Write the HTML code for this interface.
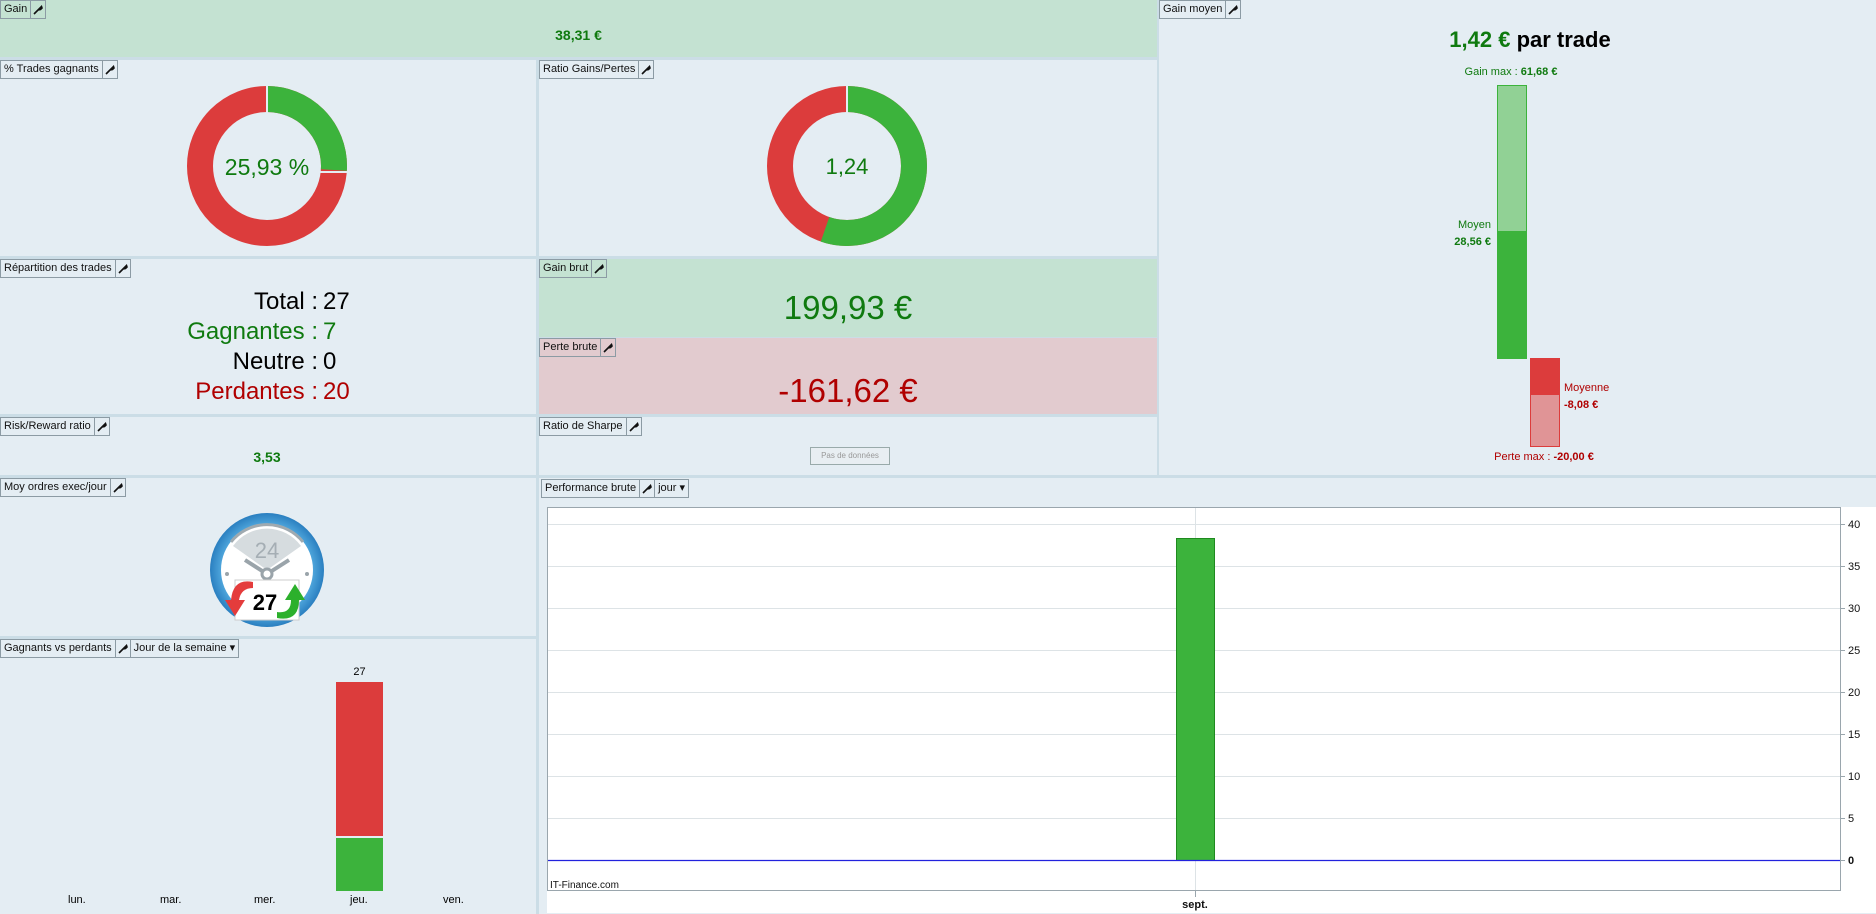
<!DOCTYPE html>
<html><head><meta charset="utf-8"><style>
*{margin:0;padding:0;box-sizing:border-box}
body{width:1876px;height:914px;background:#cbdde6;font-family:"Liberation Sans",Arial,sans-serif;position:relative;overflow:hidden}
.p{position:absolute;background:#e4edf3}
.g{background:#c4e2d2}.r{background:#e2cbcf}
.tab{position:absolute;left:0;top:0;height:19px;border:1px solid #8c9ba4;font-size:11px;line-height:17px;color:#111;display:flex;white-space:nowrap}
.tab span{padding:0 3px}
.tab i{border-left:1px solid #8c9ba4;width:15px;display:flex;align-items:center;justify-content:center}
.tab b{border-left:1px solid #8c9ba4;font-weight:normal;padding:0 3px}
.c{position:absolute;text-align:center;white-space:nowrap}
</style></head><body>
<svg width="0" height="0" style="position:absolute"><defs><symbol id="w" viewBox="0 0 10 10"><path d="M1 9 L5.5 4.5 M5 5 L8.5 1.5 L9 3 L7.5 4.5 Z" stroke="#111" stroke-width="1.6" fill="#111"/></symbol></defs></svg>

<!-- Gain -->
<div class="p g" style="left:0;top:0;width:1157px;height:57px">
<div class="tab"><span>Gain</span><i><svg width="10" height="10"><use href="#w"/></svg></i></div>
<div class="c" style="left:0;width:1157px;top:27px;font-size:14px;font-weight:bold;color:#0f7a0f">38,31 €</div></div>

<!-- % trades -->
<div class="p" style="left:0;top:60px;width:536px;height:196px">
<div class="tab"><span>% Trades gagnants</span><i><svg width="10" height="10"><use href="#w"/></svg></i></div>
<svg style="position:absolute;left:187px;top:26px" width="160" height="160" viewBox="-80 -80 160 160">
<circle r="67" fill="none" stroke="#dc3c3c" stroke-width="26"/>
<circle r="67" fill="none" stroke="#3cb33c" stroke-width="26" stroke-dasharray="109.2 1000" transform="rotate(-90)"/>
<line x1="0" y1="-81" x2="0" y2="-53" stroke="#e4edf3" stroke-width="2"/>
<line x1="53" y1="6" x2="81" y2="6" stroke="#e4edf3" stroke-width="2"/>
</svg>
<div class="c" style="left:0;width:534px;top:94px;font-size:23px;color:#0f7a0f">25,93 %</div></div>

<!-- Ratio -->
<div class="p" style="left:539px;top:60px;width:618px;height:196px">
<div class="tab"><span>Ratio Gains/Pertes</span><i><svg width="10" height="10"><use href="#w"/></svg></i></div>
<svg style="position:absolute;left:228px;top:26px" width="160" height="160" viewBox="-80 -80 160 160">
<circle r="67" fill="none" stroke="#dc3c3c" stroke-width="26"/>
<circle r="67" fill="none" stroke="#3cb33c" stroke-width="26" stroke-dasharray="232.8 1000" transform="rotate(-90)"/>
<line x1="0" y1="-81" x2="0" y2="-53" stroke="#e4edf3" stroke-width="2"/>
</svg>
<div class="c" style="left:0;width:616px;top:94px;font-size:22px;color:#0f7a0f">1,24</div></div>

<!-- Repartition -->
<div class="p" style="left:0;top:259px;width:536px;height:155px">
<div class="tab"><span>Répartition des trades</span><i><svg width="10" height="10"><use href="#w"/></svg></i></div>
<div style="position:absolute;left:0;top:28px;width:318px;text-align:right;font-size:24px;line-height:30px">
<div style="color:#000">Total :</div><div style="color:#0f7a0f">Gagnantes :</div><div style="color:#000">Neutre :</div><div style="color:#b00000">Perdantes :</div></div>
<div style="position:absolute;left:323px;top:28px;font-size:24px;line-height:30px">
<div style="color:#000">27</div><div style="color:#0f7a0f">7</div><div style="color:#000">0</div><div style="color:#b00000">20</div></div></div>

<!-- Gain brut -->
<div class="p g" style="left:539px;top:259px;width:618px;height:78px">
<div class="tab"><span>Gain brut</span><i><svg width="10" height="10"><use href="#w"/></svg></i></div>
<div class="c" style="left:0;width:618px;top:30px;font-size:33px;color:#0f7a0f">199,93 €</div></div>
<div class="p r" style="left:539px;top:338px;width:618px;height:76px">
<div class="tab"><span>Perte brute</span><i><svg width="10" height="10"><use href="#w"/></svg></i></div>
<div class="c" style="left:0;width:618px;top:34px;font-size:33px;color:#b00000">-161,62 €</div></div>

<!-- Risk -->
<div class="p" style="left:0;top:417px;width:536px;height:58px">
<div class="tab"><span>Risk/Reward ratio</span><i><svg width="10" height="10"><use href="#w"/></svg></i></div>
<div class="c" style="left:0;width:534px;top:32px;font-size:14px;font-weight:bold;color:#0f7a0f">3,53</div></div>
<div class="p" style="left:539px;top:417px;width:618px;height:58px">
<div class="tab"><span>Ratio de Sharpe</span><i><svg width="10" height="10"><use href="#w"/></svg></i></div>
<div style="position:absolute;left:271px;top:30px;width:80px;height:18px;border:1px solid #9aa;background:#e8eef2;font-size:8px;color:#999;text-align:center;line-height:16px">Pas de données</div></div>

<!-- Gain moyen -->
<div class="p" style="left:1159px;top:0;width:717px;height:475px">
<div class="tab"><span>Gain moyen</span><i><svg width="10" height="10"><use href="#w"/></svg></i></div>
<div class="c" style="left:0;width:742px;top:27px;font-size:22px;font-weight:bold"><span style="color:#0f7a0f">1,42 €</span> par trade</div>
<div class="c" style="left:300px;width:104px;top:66px;font-size:11px;color:#0f7a0f">Gain max : <b>61,68 €</b></div>
<div style="position:absolute;left:338px;top:85px;width:30px;height:146px;background:#91d195;border:1px solid #3cb33c;border-bottom:0"></div>
<div style="position:absolute;left:338px;top:231px;width:30px;height:128px;background:#3cb33c"></div>
<div style="position:absolute;left:280px;top:217px;width:52px;text-align:right;font-size:11px;color:#0f7a0f;line-height:17px">Moyen<br><b>28,56 €</b></div>
<div style="position:absolute;left:371px;top:358px;width:30px;height:37px;background:#dc3c3c"></div>
<div style="position:absolute;left:371px;top:395px;width:30px;height:52px;background:#e09496;border:1px solid #dc3c3c;border-top:0"></div>
<div style="position:absolute;left:405px;top:380px;font-size:11px;color:#b00000;line-height:17px">Moyenne<br><b>-8,08 €</b></div>
<div class="c" style="left:330px;width:110px;top:451px;font-size:11px;color:#b00000">Perte max : <b>-20,00 €</b></div></div>

<!-- Moy ordres -->
<div class="p" style="left:0;top:478px;width:536px;height:158px">
<div class="tab"><span>Moy ordres exec/jour</span><i><svg width="10" height="10"><use href="#w"/></svg></i></div>
<svg style="position:absolute;left:207px;top:32px" width="120" height="120" viewBox="-60 -60 120 120">
<defs><radialGradient id="bl"><stop offset="0.8" stop-color="#4fa6dc"/><stop offset="1" stop-color="#2a7fc0"/></radialGradient></defs>
<circle r="57" fill="url(#bl)"/><circle r="46" fill="#fff"/>
<path d="M-34 -24 A42 42 0 0 1 34 -24 L0 0 Z" fill="#d6dcdf"/>
<path d="M-36 -28 A46 46 0 0 1 36 -28" fill="none" stroke="#a0aab0" stroke-width="3"/>
<text x="0" y="-12" text-anchor="middle" font-size="22" fill="#a5aeb4" font-family="Liberation Sans">24</text>
<path d="M-22 -10 L0 4 L22 -10" fill="none" stroke="#9aa4aa" stroke-width="4"/>
<circle cx="0" cy="4" r="5" fill="#fff" stroke="#9aa4aa" stroke-width="3"/>
<circle cx="-40" cy="4" r="2" fill="#9aa4aa"/><circle cx="40" cy="4" r="2" fill="#9aa4aa"/>
<rect x="-32" y="10" width="64" height="40" fill="#fff" stroke="#ccc"/>
<path d="M-14 12 Q-34 8 -36 30 L-42 30 L-32 46 L-22 30 L-28 30 Q-26 18 -14 18 Z" fill="#e43c3c"/>
<path d="M10 48 Q32 52 32 30 L38 30 L28 14 L18 30 L24 30 Q24 44 10 42 Z" fill="#2cb02c"/>
<text x="-2" y="40" text-anchor="middle" font-size="22" font-weight="bold" font-family="Liberation Sans">27</text>
</svg></div>

<!-- Gagnants vs perdants -->
<div class="p" style="left:0;top:639px;width:536px;height:275px">
<div class="tab"><span>Gagnants vs perdants</span><i><svg width="10" height="10"><use href="#w"/></svg></i><b>Jour de la semaine ▾</b></div>
<div class="c" style="left:336px;width:47px;top:27px;font-size:11px">27</div>
<div style="position:absolute;left:336px;top:43px;width:47px;height:154px;background:#dc3c3c"></div>
<div style="position:absolute;left:336px;top:199px;width:47px;height:53px;background:#3cb33c"></div>
<div style="position:absolute;top:255px;left:0;width:536px;font-size:11px">
<span style="position:absolute;left:68px">lun.</span><span style="position:absolute;left:160px">mar.</span><span style="position:absolute;left:254px">mer.</span><span style="position:absolute;left:350px">jeu.</span><span style="position:absolute;left:443px">ven.</span></div></div>

<!-- Performance -->
<div class="p" style="left:539px;top:478px;width:1337px;height:436px">
<div class="tab" style="left:2px;top:1px"><span>Performance brute</span><i><svg width="10" height="10"><use href="#w"/></svg></i><b>jour ▾</b></div>
<div style="position:absolute;left:8px;top:29px;width:1329px;height:406px;background:#fff"></div>
<svg style="position:absolute;left:0;top:0" width="1337" height="436">
<g stroke="#dde3e6" stroke-width="1">
<line x1="9" x2="1302" y1="46.5" y2="46.5"/><line x1="9" x2="1302" y1="88.5" y2="88.5"/><line x1="9" x2="1302" y1="130.5" y2="130.5"/><line x1="9" x2="1302" y1="172.5" y2="172.5"/><line x1="9" x2="1302" y1="214.5" y2="214.5"/><line x1="9" x2="1302" y1="256.5" y2="256.5"/><line x1="9" x2="1302" y1="298.5" y2="298.5"/><line x1="9" x2="1302" y1="340.5" y2="340.5"/>
<line x1="656.5" x2="656.5" y1="29" y2="419"/></g>
<rect x="637.5" y="60.5" width="38" height="322" fill="#3cb33c" stroke="#1f8a1f"/>
<line x1="9" x2="1302" y1="382.5" y2="382.5" stroke="#2222dd" stroke-width="1.3"/>
<rect x="8.5" y="29.5" width="1293" height="383" fill="none" stroke="#9aa6ad"/>
<g stroke="#9aa6ad"><line x1="1302" x2="1306" y1="46.5" y2="46.5"/><line x1="1302" x2="1306" y1="88.5" y2="88.5"/><line x1="1302" x2="1306" y1="130.5" y2="130.5"/><line x1="1302" x2="1306" y1="172.5" y2="172.5"/><line x1="1302" x2="1306" y1="214.5" y2="214.5"/><line x1="1302" x2="1306" y1="256.5" y2="256.5"/><line x1="1302" x2="1306" y1="298.5" y2="298.5"/><line x1="1302" x2="1306" y1="340.5" y2="340.5"/><line x1="1302" x2="1306" y1="382.5" y2="382.5"/><line x1="656.5" x2="656.5" y1="413" y2="419"/></g>
<g font-family="Liberation Sans" font-size="11" fill="#111">
<text x="1309" y="50">40</text><text x="1309" y="92">35</text><text x="1309" y="134">30</text><text x="1309" y="176">25</text><text x="1309" y="218">20</text><text x="1309" y="260">15</text><text x="1309" y="302">10</text><text x="1309" y="344">5</text><text x="1309" y="386" font-weight="bold">0</text>
<text x="656" y="430" text-anchor="middle" font-weight="bold">sept.</text>
<text x="11" y="410" font-size="10">IT-Finance.com</text></g>
</svg></div>
</body></html>
